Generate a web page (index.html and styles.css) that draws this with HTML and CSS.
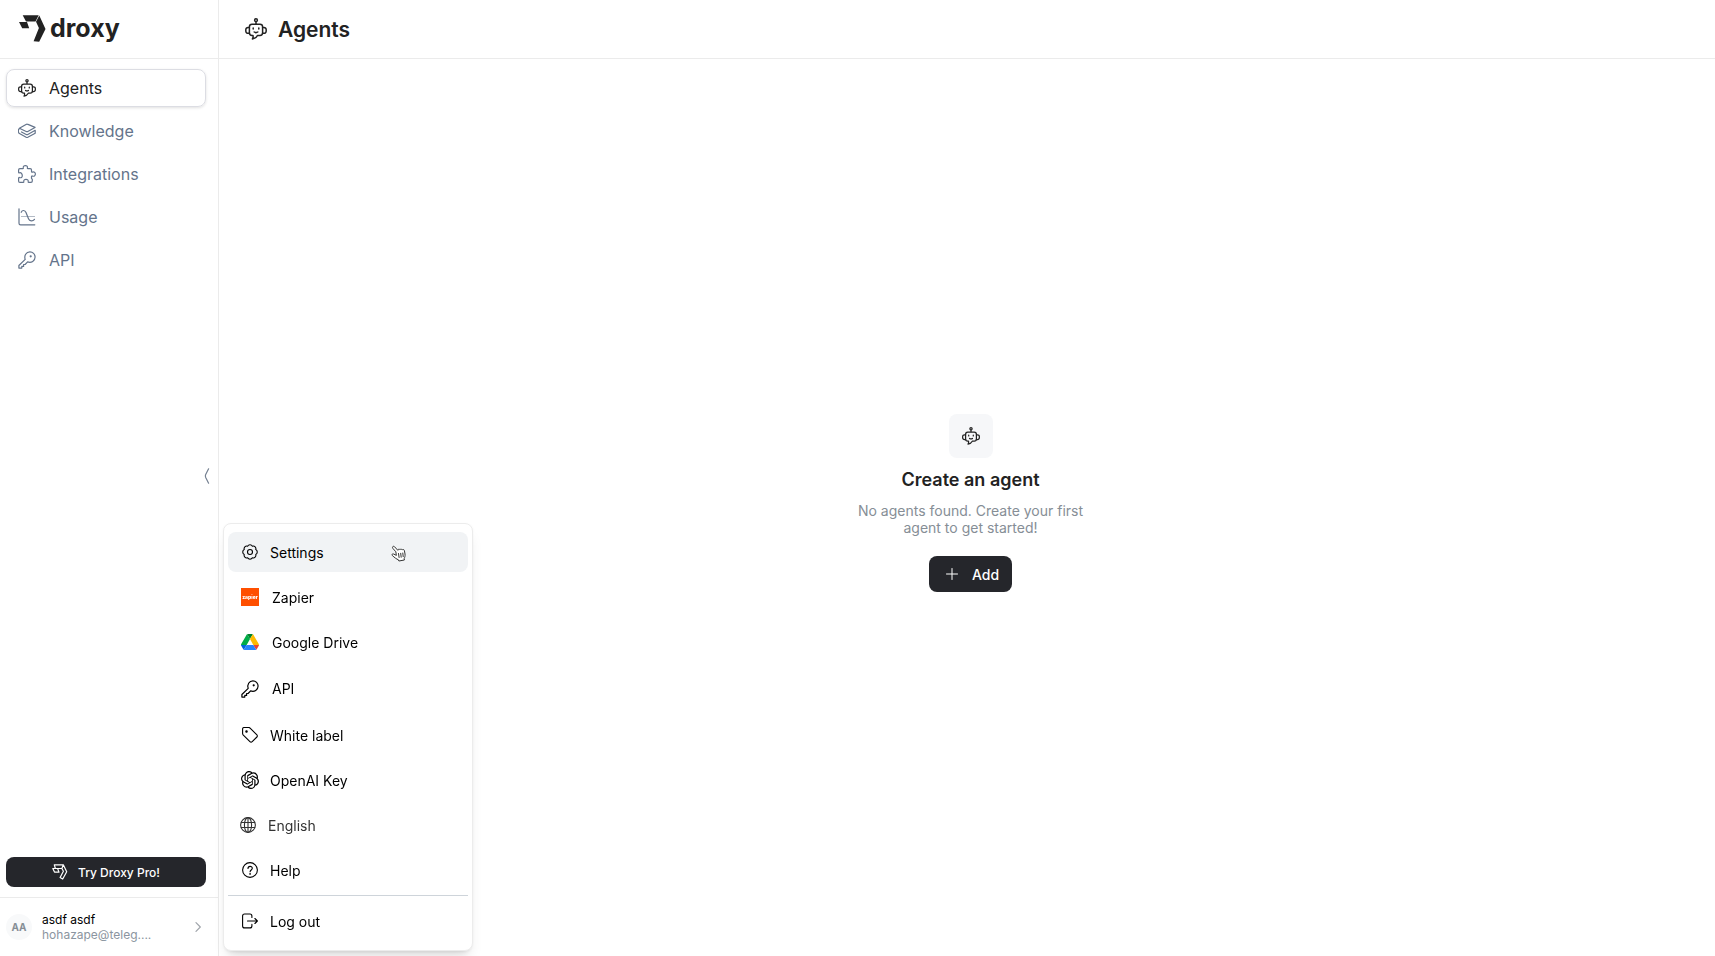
FILE: index.html
```html
<!DOCTYPE html>
<html lang="en">
  <head>
    <meta charset="utf-8">
    <meta name="viewport" content="width=device-width, initial-scale=1">
    <title>Droxy - Agents</title>
    <link rel="stylesheet" href="styles.css">
  </head>
  <body>
    <!-- Shared icons -->
    <svg class="sprite" aria-hidden="true">
      <symbol id="icon-bot" viewBox="0 0 22 22">
        <circle cx="11" cy="2.2" r="1.4"/>
        <path d="M11 3.8v2.4M7 6.2h8a2.6 2.6 0 0 1 2.6 2.6v6a2.6 2.6 0 0 1-2.6 2.6h-2.4c-1 1.8-2.600 3.200-5.200 3.500.7-1.100.9-2.200.6-3.500H7a2.600 2.600 0 0 1-2.600-2.600v-6A2.600 2.600 0 0 1 7 6.200z"/>
        <path d="M4.400 9.500H3a2.200 2.200 0 0 0-2.200 2.200v1.400A2.200 2.200 0 0 0 3 15.300h1.400M17.600 9.500H19a2.200 2.200 0 0 1 2.200 2.200v1.400a2.200 2.200 0 0 1-2.200 2.200h-1.400M8.200 10v1M13.800 10v1M9.200 14c1 .700 2.600.700 3.600 0"/>
      </symbol>
      <symbol id="icon-key" viewBox="0 0 18 18">
        <path d="M7.200 8.400.900 14.500v2.600h2.900v-1.700h1.800v-1.900h1.500l2.500-2.600c3.700 1.400 7.500-.9 7.500-4.800A5.200 5.200 0 0 0 11.900.900C8.100.900 5.900 4.700 7.200 8.400z"/>
        <circle cx="12.700" cy="5.300" r=".500"/>
      </symbol>
    </svg>

    <aside class="sidebar">
      <a class="logo" href="#">
        <svg class="logo-mark" viewBox="0 0 27 27" aria-hidden="true">
          <path d="M3.700.300h16L16.500 6.600H7zM0 7h8l2.200 6.300H3.200zM20.300.600 26.500 14l-6.300 12.700-5.600-.5L19.900 13l-2.900-6.200z"/>
        </svg>
        <span>droxy</span>
      </a>

      <nav class="nav">
        <a class="nav-item active" href="#"><svg class="icon"><use href="#icon-bot"/></svg>Agents</a>
        <a class="nav-item" href="#">
          <svg class="icon" viewBox="0 0 18 18"><path d="M1.400 6.300 8 2.400q1-.6 2 0l7 3-7.200 4.100q-.8.400-1.600 0zM1.400 6.300C.3 7.500.3 10 1 11.300l7.200 4q.8.400 1.600 0l7.400-4.100V8.300L9.800 12.500q-.8.400-1.600 0L3.500 10"/></svg>
          Knowledge
        </a>
        <a class="nav-item" href="#">
          <svg class="icon" viewBox="0 0 18 18"><path d="M2.500 3.700h2.300c.6 0 .7-.5.500-1C5 1.400 6 .600 7.400.600s2.400.8 2 2.100c-.2.500-.1 1 .5 1h2.300c.8 0 1.300.5 1.300 1.300v1.600c0 .7.500.8 1 .5 1.400-.5 2.900.400 2.900 2s-1.500 2.500-2.900 2c-.5-.3-1-.2-1 .5v1.700l.8 1v1.800c0 .8-.5 1.300-1.300 1.300h-2.300c-.6 0-.7-.5-.5-1 .3-1.300-.8-2.100-2.200-2.100s-2.500.8-2.200 2.100c.2.500.1 1-.5 1H1.900c-.8 0-1.300-.5-1.300-1.300v-3c0-.7.500-.8 1-.5 1.500.5 2.700-.4 2.700-1.900S3.100 7.200 1.600 7.700c-.5.300-1 .2-1-.5V5c0-.8.500-1.300 1.300-1.300z"/></svg>
          Integrations
        </a>
        <a class="nav-item" href="#">
          <svg class="icon" viewBox="0 0 18 18"><path d="M1 .800v14.400c0 1 .6 1.600 1.600 1.600h14.200M3.200 4.300C4.300 1.800 7 1.900 8 4.500l2.500 6.200c1.100 2.700 4.200 2.900 6 .6"/><path class="dots" d="M3.500 8.500h13"/></svg>
          Usage
        </a>
        <a class="nav-item" href="#"><svg class="icon"><use href="#icon-key"/></svg>API</a>
      </nav>

      <button class="collapse" type="button" aria-label="Collapse sidebar">
        <svg viewBox="0 0 6 16"><path d="M4.600.800 1.700 6.600q-.6 1.400 0 2.800l2.900 5.800"/></svg>
      </button>

      <button class="pro-button" type="button">
        <svg viewBox="0 0 16 16"><path d="M2.300.800h9l3.400 7-4 7.200-2.600-1.500 3.300-6.200-1.500-2.800H3.400zM.800 4.500h4.800L7 8.100H2.500zM11.300.800 9.900 4.500"/></svg>
        Try Droxy Pro!
      </button>

      <button class="user" type="button">
        <span class="avatar">AA</span>
        <span class="user-info">
          <span class="user-name">asdf asdf</span>
          <span class="user-email">hohazape@teleg....</span>
        </span>
        <svg class="chevron" viewBox="0 0 6 10"><path d="m1 .700 4.300 4.300L1 9.300"/></svg>
      </button>
    </aside>

    <main class="main">
      <header class="page-header">
        <svg class="header-icon"><use href="#icon-bot"/></svg>
        <h1>Agents</h1>
      </header>
      <section class="empty">
        <div class="empty-icon"><svg class="icon"><use href="#icon-bot"/></svg></div>
        <h2>Create an agent</h2>
        <p>No agents found. Create your first agent to get started!</p>
        <button class="add-button" type="button">
          <svg viewBox="0 0 12 12"><path d="M6 .500v11M.500 6h11"/></svg>
          Add
        </button>
      </section>
    </main>

    <!-- Account menu -->
    <div class="menu">
      <a class="menu-item hover" href="#">
        <svg class="icon-sm" viewBox="0 0 16 16"><path d="M13.800 5.600a2.700 2.700 0 0 1 0 4.800 2.700 2.700 0 0 1-3.400 3.400 2.700 2.700 0 0 1-4.800 0 2.700 2.700 0 0 1-3.400-3.400 2.700 2.700 0 0 1 0-4.800 2.700 2.700 0 0 1 3.400-3.400 2.700 2.700 0 0 1 4.800 0 2.700 2.700 0 0 1 3.400 3.400z"/><circle cx="8" cy="8" r="2.500"/></svg>
        Settings
        <svg class="pointer" viewBox="0 0 15 17"><path d="M4.600 6.500 1.800 3.300C.9 1.900 2.300.600 3.500 1.700l3.300 3.600C7 4 8.500 3.900 9 4.800c.6-.9 1.700-.8 2.200.1.6-.7 2-.5 2.200.7l.6 3.400c.3 2-.3 3.400-.8 4.500l.2 1.500-5.500 1-.6-1.300C5.600 14.200 3.500 12.500 1.300 10.500c-.9-1 .3-2 1.300-1.500l2.400 1.200zM7.500 8.500l.6 4M9.700 8.300l.5 3.900M11.800 8l.4 3.700"/></svg>
      </a>
      <a class="menu-item wide" href="#">
        <svg class="brand" viewBox="0 0 18 18"><path fill="#ff4f00" d="M0 0h18v18H0z"/><text class="zapier-text" x="9" y="11">zapier</text></svg>
        Zapier
      </a>
      <a class="menu-item wide" href="#">
        <svg class="brand" viewBox="0 0 87.300 78" aria-hidden="true">
          <path fill="#0066da" d="m6.600 66.850 3.850 6.650c.8 1.400 1.950 2.500 3.300 3.300L27.500 53H0c0 1.550.4 3.100 1.200 4.500z"/>
          <path fill="#00ac47" d="M43.650 25 29.900 1.200c-1.350.8-2.500 1.900-3.300 3.300L1.200 48.500A9.060 9.060 0 0 0 0 53h27.500z"/>
          <path fill="#ea4335" d="M73.550 76.800c1.350-.8 2.500-1.900 3.300-3.300l1.600-2.750L86.100 57.500c.8-1.400 1.200-2.950 1.200-4.500H59.800l5.850 11.500z"/>
          <path fill="#00832d" d="M43.650 25 57.400 1.200C56.050.4 54.500 0 52.900 0H34.400c-1.600 0-3.150.45-4.500 1.200z"/>
          <path fill="#2684fc" d="M59.800 53H27.500L13.750 76.800c1.350.8 2.900 1.200 4.500 1.200h50.800c1.600 0 3.150-.45 4.500-1.200z"/>
          <path fill="#ffba00" d="m73.400 26.500-12.700-22c-.8-1.400-1.950-2.500-3.300-3.300L43.650 25l16.150 28h27.450c0-1.550-.4-3.100-1.200-4.500z"/>
        </svg>
        Google Drive
      </a>
      <a class="menu-item wide tall" href="#"><svg class="icon"><use href="#icon-key"/></svg>API</a>
      <a class="menu-item" href="#">
        <svg class="icon-sm" viewBox="0 0 16 16"><path d="M.600 2v4.600c0 .5.200.9.500 1.300l6.800 6.800c.7.700 1.600.7 2.300 0l4.700-4.700c.6-.6.600-1.500 0-2.100L8.100 1.100C7.700.700 7.200.500 6.700.500H2C1.200.500.600 1.200.600 2z"/><circle class="solid" cx="4.500" cy="4.500" r=".7"/></svg>
        White label
      </a>
      <a class="menu-item openai" href="#">
        <svg class="brand solid" viewBox="0 0 24 24"><path d="M22.282 9.821a5.985 5.985 0 0 0-.516-4.910 6.046 6.046 0 0 0-6.510-2.900A6.065 6.065 0 0 0 4.981 4.180a5.985 5.985 0 0 0-3.998 2.900 6.046 6.046 0 0 0 .743 7.097 5.980 5.980 0 0 0 .510 4.911 6.051 6.051 0 0 0 6.515 2.900A5.985 5.985 0 0 0 13.260 24a6.056 6.056 0 0 0 5.772-4.206 5.990 5.990 0 0 0 3.997-2.900 6.056 6.056 0 0 0-.747-7.073zM13.260 22.430a4.476 4.476 0 0 1-2.876-1.040l.141-.081 4.779-2.758a.795.795 0 0 0 .392-.681v-6.737l2.020 1.168a.071.071 0 0 1 .038.052v5.583a4.504 4.504 0 0 1-4.494 4.494zM3.600 18.304a4.470 4.470 0 0 1-.535-3.014l.142.085 4.783 2.759a.771.771 0 0 0 .780 0l5.843-3.369v2.332a.080.080 0 0 1-.033.062L9.740 19.950a4.500 4.500 0 0 1-6.140-1.646zM2.340 7.896a4.485 4.485 0 0 1 2.366-1.973V11.600a.766.766 0 0 0 .388.676l5.815 3.355-2.020 1.168a.076.076 0 0 1-.071 0l-4.830-2.786A4.504 4.504 0 0 1 2.340 7.872zm16.597 3.855-5.833-3.387L15.119 7.200a.076.076 0 0 1 .071 0l4.830 2.791a4.494 4.494 0 0 1-.676 8.105v-5.678a.790.790 0 0 0-.407-.667zm2.010-3.023-.141-.085-4.774-2.782a.776.776 0 0 0-.785 0L9.409 9.230V6.897a.066.066 0 0 1 .028-.061l4.830-2.787a4.500 4.500 0 0 1 6.680 4.660zm-12.640 4.135-2.020-1.164a.080.080 0 0 1-.038-.057V6.075a4.500 4.500 0 0 1 7.375-3.453l-.142.080L8.704 5.460a.795.795 0 0 0-.393.681zm1.097-2.365 2.602-1.500 2.607 1.500v2.999l-2.597 1.500-2.607-1.500z"/></svg>
        OpenAI Key
      </a>
      <button class="menu-item language" type="button">
        <svg class="icon-sm" viewBox="0 0 16 16"><circle cx="8" cy="8" r="7.400"/><ellipse cx="8" cy="8" rx="3.600" ry="7.400"/><path d="M1.300 5.500h13.400M1.300 10.500h13.400M8 .600v14.800"/></svg>
        English
      </button>
      <a class="menu-item" href="#">
        <svg class="icon-sm" viewBox="0 0 16 16"><circle cx="8" cy="8" r="7.400"/><path d="M6 6.500C6 3.600 10.300 3.700 10.300 6.300 10.300 8 8.100 7.900 8.100 9.700"/><circle class="solid" cx="8.100" cy="11.900" r=".3"/></svg>
        Help
      </a>
      <hr>
      <button class="menu-item" type="button">
        <svg class="icon-sm" viewBox="0 0 16 16"><path d="M9.900 4.500V3c0-1.300-.8-2-2-2H2.600c-1.200 0-2 .8-2 2v9.900c0 1.200.8 2 2 2h5.300c1.200 0 2-.7 2-2v-1.500M5.500 8h9.900m-2.500-2.500L15.400 8l-2.500 2.500"/></svg>
        Log out
      </button>
    </div>
  </body>
</html>
```
FILE: styles.css
```css
* {
  box-sizing: border-box;
}

body {
  display: flex;
  min-height: 100vh;
  margin: 0;
  font-family: Inter, "Liberation Sans", sans-serif;
  font-size: 14px;
  color: #222;
  background: #fff;
}

a {
  color: inherit;
  text-decoration: none;
}

button {
  font: inherit;
  color: inherit;
  border: none;
  background: none;
  cursor: pointer;
}

svg {
  flex-shrink: 0;
  fill: none;
  stroke: currentColor;
  stroke-width: 1.2;
  stroke-linecap: round;
  stroke-linejoin: round;
}

#icon-bot {
  stroke-width: 1.5;
}

.sprite {
  position: absolute;
  width: 0;
  height: 0;
}

.icon {
  width: 18px;
  height: 18px;
}

.icon-sm {
  width: 16px;
  height: 16px;
  stroke-width: 1.1;
}

.solid {
  fill: currentColor;
}

/* Sidebar */
.sidebar {
  position: relative;
  display: flex;
  flex-direction: column;
  flex-shrink: 0;
  width: 219px;
  border-right: 1px solid #ebebeb;
}

.logo {
  display: flex;
  align-items: center;
  gap: 4px;
  height: 59px;
  padding: 0 19px 2px;
  border-bottom: 1px solid #ebebeb;
  font-size: 25px;
  font-weight: 700;
  line-height: 32px;
}

.logo-mark {
  width: 27px;
  height: 27px;
  fill: currentColor;
  stroke: none;
}

.nav {
  display: flex;
  flex: 1;
  flex-direction: column;
  gap: 5px;
  padding: 10px 12px 10px 6px;
}

.nav-item {
  display: flex;
  align-items: center;
  gap: 13px;
  height: 38px;
  padding: 0 11px;
  border: 1px solid transparent;
  border-radius: 8px;
  font-size: 16px;
  color: #64748b;
}

.nav-item.active {
  color: #222;
  border-color: #dcdde3;
  box-shadow: 0 1px 3px rgba(0, 0, 0, 0.12);
}

.dots {
  stroke-width: 1;
  stroke-linecap: butt;
  stroke-dasharray: 1 1;
}

.collapse {
  position: absolute;
  top: calc(50% - 2px);
  right: 8px;
  padding: 0;
  color: #748091;
  transform: translateY(-50%);
}

.collapse svg {
  display: block;
  width: 6px;
  height: 16px;
}

.pro-button {
  display: flex;
  align-items: center;
  justify-content: center;
  gap: 10px;
  height: 30px;
  margin: 0 12px 10px 6px;
  border-radius: 8px;
  font-size: 12px;
  font-weight: 500;
  color: #fff;
  background: #25262b;
}

.pro-button svg {
  width: 16px;
  height: 16px;
}

.user {
  display: flex;
  align-items: center;
  gap: 10px;
  height: 59px;
  padding: 0 17px 0 6px;
  border-top: 1px solid #ebebeb;
  font-size: 12px;
  line-height: 15px;
  text-align: left;
}

.avatar {
  width: 26px;
  border-radius: 50%;
  font-size: 10px;
  font-weight: 700;
  line-height: 26px;
  text-align: center;
  color: #868e96;
  background: #f8f9fa;
}

.user-info {
  display: flex;
  flex: 1;
  flex-direction: column;
}

.user-name {
  color: #000;
}

.user-email {
  color: #8b95a0;
}

.chevron {
  width: 6px;
  height: 10px;
  color: #a0a5ab;
}

/* Page */
.main {
  display: flex;
  flex: 1;
  flex-direction: column;
}

.page-header {
  display: flex;
  align-items: center;
  gap: 11px;
  height: 59px;
  padding: 0 26px;
  border-bottom: 1px solid #ebebeb;
}

.page-header h1 {
  margin: 0;
  font-size: 21px;
  font-weight: 600;
}

.header-icon {
  width: 22px;
  height: 22px;
}

.empty {
  display: flex;
  flex: 1;
  flex-direction: column;
  align-items: center;
  justify-content: center;
  padding: 0 0 9px 7px;
}

.empty-icon {
  display: flex;
  align-items: center;
  justify-content: center;
  width: 44px;
  height: 44px;
  border-radius: 8px;
  background: #f6f7f9;
}

.empty h2 {
  margin: 10px 0;
  font-size: 18px;
  font-weight: 600;
  line-height: 24px;
}

.empty p {
  max-width: 240px;
  margin: 0 0 20px;
  line-height: 17px;
  text-align: center;
  color: #868e96;
}

.add-button {
  display: flex;
  align-items: center;
  gap: 14px;
  height: 36px;
  padding: 0 13px 0 17px;
  border-radius: 8px;
  font-weight: 500;
  color: #fff;
  background: #25262b;
}

.add-button svg {
  width: 12px;
  height: 12px;
  stroke-width: 1;
}

/* Account menu */
.menu {
  position: fixed;
  bottom: 5px;
  left: 223px;
  display: flex;
  flex-direction: column;
  gap: 5px;
  width: 250px;
  padding: 8px 4px 9px;
  border: 1px solid #ececec;
  border-radius: 8px;
  color: #000;
  background: #fff;
  box-shadow: 0 1px 3px rgba(0, 0, 0, 0.05), 0 10px 15px -5px rgba(0, 0, 0, 0.12), 0 7px 7px -5px rgba(0, 0, 0, 0.08);
}

.menu-item {
  position: relative;
  display: flex;
  align-items: center;
  gap: 12px;
  height: 40px;
  padding: 0 14px;
  border-radius: 8px;
}

.menu-item.wide {
  gap: 13px;
  padding: 0 13px;
}

.menu-item.tall {
  height: 43px;
}

.menu-item.openai {
  gap: 11px;
  padding: 0 13px;
}

.menu-item.language {
  padding: 0 12px;
  color: #333;
}

.menu-item.hover {
  background: #f1f3f5;
}

.menu hr {
  width: 100%;
  height: 1px;
  margin: 0;
  border: none;
  background: #ced4da;
}

.brand {
  width: 18px;
  height: 18px;
  stroke: none;
}

.zapier-text {
  font-size: 5px;
  font-weight: 800;
  text-anchor: middle;
  fill: #fff;
}

/* Hand cursor over the highlighted entry */
.pointer {
  position: absolute;
  top: 13px;
  right: 62px;
  width: 15px;
  height: 17px;
  fill: #fff;
  stroke-width: 1;
  color: #333;
}
```
